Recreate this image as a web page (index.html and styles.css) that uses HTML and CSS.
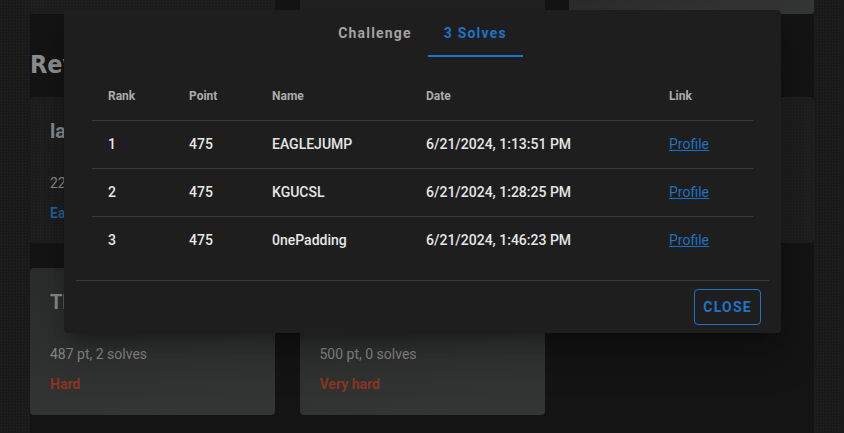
FILE: index.html
```html
<!DOCTYPE html>
<html lang="en">
<head>
<meta charset="utf-8">
<title>Solves</title>
<link rel="stylesheet" href="styles.css">
</head>
<body>
<div class="page">
  <div class="grid grid-top">
    <div class="card card-dark card-cut"></div>
    <div class="card card-mid card-cut"></div>
    <div class="card card-light card-cut"></div>
  </div>
  <h2 class="category">Reversing</h2>
  <div class="grid">
    <div class="card card-dark">
      <div class="card-title">lazy</div>
      <div class="card-meta">223 pt, 5 solves</div>
      <div class="card-level level-easy">Easy</div>
    </div>
    <div class="card card-dark"></div>
    <div class="card card-dark"></div>
  </div>
  <div class="grid grid-last">
    <div class="card card-light">
      <div class="card-title">The</div>
      <div class="card-meta">487 pt, 2 solves</div>
      <div class="card-level level-hard">Hard</div>
    </div>
    <div class="card card-light">
      <div class="card-title">Last</div>
      <div class="card-meta">500 pt, 0 solves</div>
      <div class="card-level level-hard">Very hard</div>
    </div>
  </div>
</div>

<div class="dialog">
  <div class="tabs">
    <div class="tab">Challenge</div>
    <div class="tab tab-active">3 Solves</div>
  </div>
  <div class="dialog-body">
    <table class="solves">
      <colgroup>
        <col class="c-rank"><col class="c-point"><col class="c-name"><col class="c-date"><col class="c-link">
      </colgroup>
      <thead>
        <tr><th>Rank</th><th>Point</th><th>Name</th><th>Date</th><th>Link</th></tr>
      </thead>
      <tbody>
        <tr><td>1</td><td>475</td><td>EAGLEJUMP</td><td>6/21/2024, 1:13:51 PM</td><td><a href="#">Profile</a></td></tr>
        <tr><td>2</td><td>475</td><td>KGUCSL</td><td>6/21/2024, 1:28:25 PM</td><td><a href="#">Profile</a></td></tr>
        <tr><td>3</td><td>475</td><td>0nePadding</td><td>6/21/2024, 1:46:23 PM</td><td><a href="#">Profile</a></td></tr>
      </tbody>
    </table>
  </div>
  <div class="divider"></div>
  <div class="actions">
    <button class="btn-close">Close</button>
  </div>
</div>
</body>
</html>
```
FILE: styles.css
```css
html, body {
  margin: 0;
  padding: 0;
}
body {
  width: 844px;
  height: 433px;
  overflow: hidden;
  background-color: #1a1a1a;
  background-image: radial-gradient(rgba(255,255,255,0.045) 0.7px, transparent 0.9px);
  background-size: 3px 3px;
  font-family: Roboto, "Liberation Sans", sans-serif;
  position: relative;
}
.page {
  margin: 0 30px;
  height: 433px;
  background: #141414;
}
.grid {
  display: grid;
  grid-template-columns: repeat(3, 245px);
  column-gap: 24.5px;
}
.grid-last {
  margin-top: 25px;
}
.card {
  height: 146px;
  border-radius: 4px;
  box-sizing: border-box;
  padding: 18px 20px;
}
.card-dark {
  background-color: #1d1d1d;
  background-image: radial-gradient(rgba(255,255,255,0.03) 0.7px, transparent 0.9px);
  background-size: 3px 3px;
}
.card-mid {
  background: #202020;
}
.card-light {
  background: linear-gradient(165deg, #2a2b2b 0%, #313333 60%, #343636 100%);
  height: 147px;
}
.card.card-cut {
  height: 14px;
  padding: 0;
  border-radius: 0 0 4px 4px;
}
.category {
  margin: 0;
  height: 83px;
  box-sizing: border-box;
  padding-top: 36px;
  font-family: "DejaVu Sans Condensed", "DejaVu Sans", sans-serif;
  font-stretch: condensed;
  font-weight: bold;
  font-size: 25px;
  line-height: 30px;
  color: #8e8e8e;
}
.card-title {
  font-size: 20px;
  line-height: 32px;
  font-weight: 700;
  color: #8a8a8a;
}
.card-meta {
  margin-top: 26px;
  font-size: 14px;
  line-height: 20px;
  color: #8a8a8a;
}
.card-level {
  margin-top: 10px;
  font-size: 14px;
  line-height: 20px;
  font-weight: 700;
}
.level-easy { color: #245f98; }
.level-hard { color: #8c3520; }

/* dialog */
.dialog {
  position: absolute;
  left: 64px;
  top: 10px;
  width: 717px;
  background: #1e1e1e;
  border-radius: 4px;
  box-shadow: 0 11px 15px -7px rgba(0,0,0,0.3), 0 24px 38px 3px rgba(0,0,0,0.2);
}
.tabs {
  display: flex;
  justify-content: center;
  height: 47px;
}
.tab {
  padding: 0 16px;
  min-width: 90px;
  box-sizing: border-box;
  display: flex;
  align-items: center;
  justify-content: center;
  font-size: 14px;
  font-weight: 700;
  letter-spacing: 0.085em;
  color: #a2a2a2;
  border-bottom: 2px solid transparent;
  padding-top: 1px;
}
.tab-active {
  color: #1f73c6;
  border-bottom-color: #1f73c6;
}
.dialog-body {
  padding: 15px 28px 16px;
}
.solves {
  width: 661px;
  border-collapse: collapse;
  table-layout: fixed;
}
.c-rank { width: 81px; }
.c-point { width: 83px; }
.c-name { width: 154px; }
.c-date { width: 243px; }
.c-link { width: 100px; }
.solves th, .solves td {
  height: 48px;
  padding: 0 16px;
  text-align: left;
  box-sizing: border-box;
}
.solves th {
  font-size: 12px;
  font-weight: 700;
  color: #ababab;
  border-bottom: 1px solid #3a3a3a;
}
.solves td {
  font-size: 14px;
  color: #e6e6e6;
  font-weight: 500;
}
.solves tbody tr + tr td {
  border-top: 1px solid #3a3a3a;
}
.solves a {
  color: #1f6fc0;
  text-decoration: underline;
  font-weight: 400;
}
.divider {
  margin: 0 12px;
  height: 1px;
  background: #3a3a3a;
}
.actions {
  display: flex;
  justify-content: flex-end;
  padding: 8px 20px;
}
.btn-close {
  height: 36px;
  padding: 0 8px;
  background: transparent;
  border: 1px solid #1f73c6;
  border-radius: 4px;
  color: #1f73c6;
  font-family: Roboto, "Liberation Sans", sans-serif;
  font-size: 14px;
  font-weight: 700;
  letter-spacing: 0.09em;
  text-transform: uppercase;
}
```
